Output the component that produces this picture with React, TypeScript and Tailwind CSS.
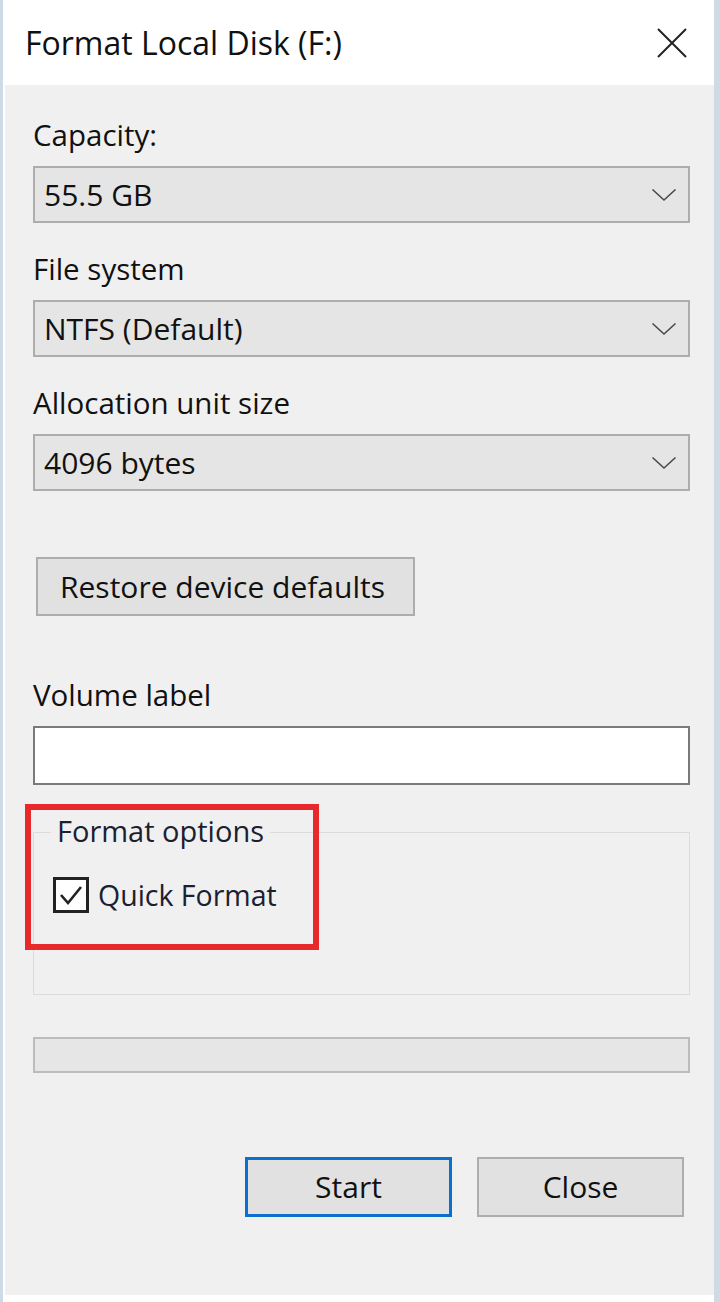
const fields = [
  { label: 'Capacity:', value: '55.5 GB' },
  { label: 'File system', value: 'NTFS (Default)' },
  { label: 'Allocation unit size', value: '4096 bytes' },
]

function Select({ value }: { value: string }) {
  return (
    <div className="flex h-[57px] items-center justify-between border-2 border-[#adadad] bg-[#e5e5e5] pl-[9px] pr-[11px]">
      <span className="text-[30px] leading-none text-[#111]">{value}</span>
      <svg width="26" height="14" viewBox="0 0 26 14" className="text-[#4a4a4a]">
        <path d="M1.5 1.5 L13 12 L24.5 1.5" stroke="currentColor" strokeWidth="1.6" fill="none" />
      </svg>
    </div>
  )
}

export default function App() {
  return (
    <div className="flex h-[1302px] w-[720px] flex-col bg-white font-['Segoe_UI','Open_Sans',sans-serif] text-[#111]">
      <div className="flex flex-1 flex-col border-l-[3px] border-r-[6px] border-[#cddbe6] pl-[2px] pb-[7px]">
        {/* Title bar */}
        <div className="flex h-[85px] shrink-0 items-center justify-between bg-white pl-[20px] pr-[26px]">
          <span className="text-[32px] leading-none">Format Local Disk (F:)</span>
          <svg width="32" height="32" viewBox="0 0 32 32" className="text-[#222]">
            <path d="M2 2 L30 30 M30 2 L2 30" stroke="currentColor" strokeWidth="2" fill="none" />
          </svg>
        </div>

        {/* Body */}
        <div className="flex flex-1 flex-col bg-[#f0f0f0] pl-[28px] pr-[24px] pt-[33px]">
          {fields.map((f, i) => (
            <div key={i} className={i === 0 ? '' : 'mt-[29px]'}>
              <div className="mb-[14px] h-[34px] text-[29.5px] leading-[34px]">{f.label}</div>
              <Select value={f.value} />
            </div>
          ))}

          <button className="ml-[3px] mt-[66px] flex h-[59px] w-[379px] items-center border-2 border-[#adadad] bg-[#e1e1e1] pl-[22px] text-[30px] leading-none text-[#111]">
            Restore device defaults
          </button>

          <div className="mt-[62px] h-[34px] text-[29.5px] leading-[34px]">Volume label</div>
          <div className="mt-[14px] h-[59px] border-2 border-[#7a7a7a] bg-white" />

          {/* Format options group */}
          <div className="relative mt-[47px] h-[163px] border border-[#dcdcdc]">
            <div className="absolute left-[17px] top-[-20px] bg-[#f0f0f0] px-[6px] text-[29px] leading-[36px] text-[#1b2030]">
              Format options
            </div>
            <div className="ml-[19px] mt-[44px] flex items-center gap-[9px]">
              <div className="flex h-[36px] w-[36px] items-center justify-center border-[3px] border-[#222] bg-white">
                <svg width="26" height="26" viewBox="0 0 26 26">
                  <path d="M3 13 L10 21 L23 5" stroke="#222" strokeWidth="2.6" fill="none" />
                </svg>
              </div>
              <span className="text-[28.5px] leading-none text-[#1b2030]">Quick Format</span>
            </div>
            <div className="pointer-events-none absolute left-[-9px] top-[-29px] h-[146px] w-[294px] border-[6px] border-[#e8292b]" />
          </div>

          {/* Progress bar */}
          <div className="mt-[42px] h-[36px] border-2 border-[#bcbcbc] bg-[#e6e6e6]" />

          {/* Buttons */}
          <div className="mt-[84px] flex justify-end gap-[25px] pr-[6px]">
            <button className="flex h-[60px] w-[207px] items-center justify-center border-[3px] border-[#0a6fce] bg-[#e1e1e1] text-[30px] leading-none text-[#111]">
              Start
            </button>
            <button className="flex h-[60px] w-[207px] items-center justify-center border-2 border-[#adadad] bg-[#e1e1e1] text-[30px] leading-none text-[#111]">
              Close
            </button>
          </div>
        </div>
      </div>
    </div>
  )
}
